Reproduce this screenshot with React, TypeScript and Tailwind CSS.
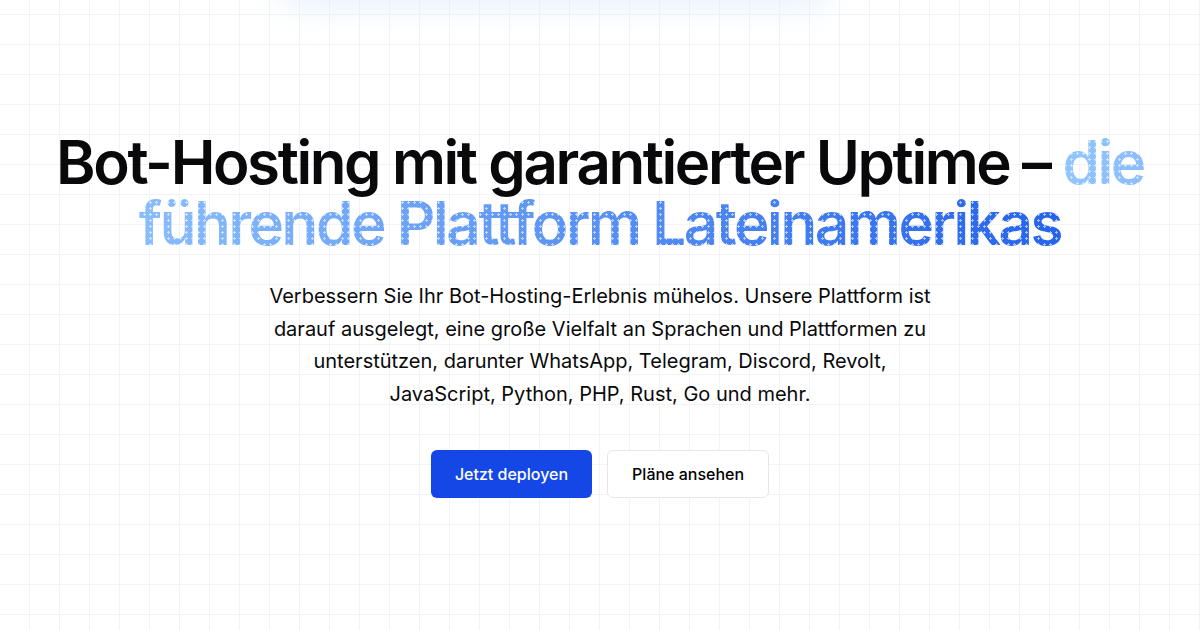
export default function App() {
  return (
    <div className="relative flex h-screen w-full items-center justify-center overflow-hidden bg-white bg-[linear-gradient(to_right,#f2f3f5_1px,transparent_1px),linear-gradient(to_bottom,#f2f3f5_1px,transparent_1px)] bg-[size:30px_30px] bg-[position:29px_14px] font-['Inter',sans-serif]">
      {/* soft glow at the top */}
      <div className="pointer-events-none absolute -top-14 left-1/2 h-16 w-[560px] -translate-x-[58%] rounded-full bg-blue-100/60 blur-lg" />

      <section className="relative flex max-w-6xl flex-col items-center px-4 text-center">
        <h1 className="text-[60px] leading-[61px] font-semibold tracking-[-0.04em] text-[#09090b]">
          Bot-Hosting mit garantierter Uptime –{' '}
          <span className="bg-[radial-gradient(circle_at_3.5px_3.5px,rgba(255,255,255,0.6)_1.2px,transparent_1.3px),linear-gradient(to_right,#93c5fd,#2563eb)] bg-[size:6px_6px,100%_100%] bg-clip-text text-transparent">
            die führende Plattform Lateinamerikas
          </span>
        </h1>

        <p className="mt-[26px] max-w-2xl text-xl leading-[32.5px] text-zinc-950">
          Verbessern Sie Ihr Bot-Hosting-Erlebnis mühelos. Unsere Plattform ist darauf ausgelegt, eine große Vielfalt
          an Sprachen und Plattformen zu unterstützen, darunter WhatsApp, Telegram, Discord, Revolt, JavaScript,
          Python, PHP, Rust, Go und mehr.
        </p>

        <div className="mt-10 flex items-center gap-[15px]">
          <button className="h-12 rounded-md bg-blue-700 px-6 text-base font-medium text-white">
            Jetzt deployen
          </button>
          <button className="h-12 rounded-md border border-gray-200 bg-white px-6 text-base font-medium text-black">
            Pläne ansehen
          </button>
        </div>
      </section>
    </div>
  );
}
